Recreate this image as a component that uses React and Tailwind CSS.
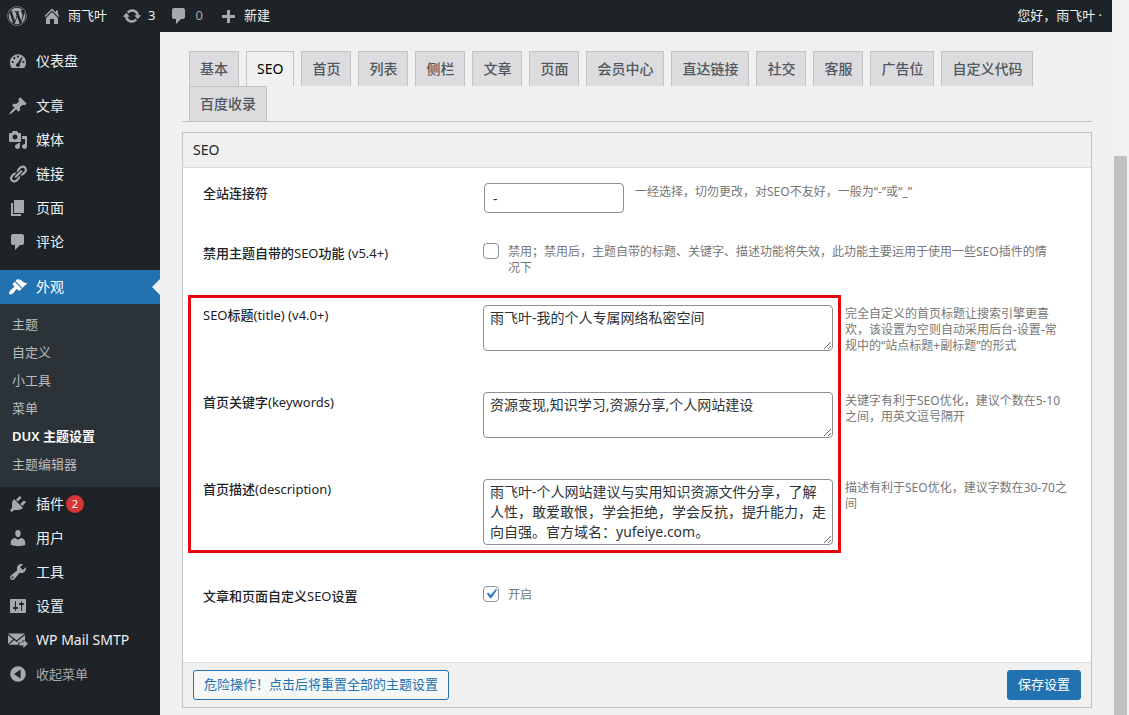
import { useState } from "react";
import { FaWordpress } from "react-icons/fa";
import clsx from "clsx";

const ICONS = {
  home: "M16 8.5l1.53 1.53-1.06 1.06L10 4.6l-6.47 6.49-1.06-1.06L10 2.5l4 4v-2h2v4zm-6-2.46l6 5.99V18H12v-5H8v5H4v-5.97z",
  update:
    "M10.2 3.28c3.53 0 6.43 2.61 6.92 6h2.08l-3.5 4-3.5-4h2.32c-.45-1.97-2.21-3.45-4.32-3.45-1.45 0-2.73.71-3.54 1.78L4.95 5.66C6.23 4.2 8.11 3.28 10.2 3.28zm-.4 13.44c-3.52 0-6.43-2.61-6.92-6H.8l3.5-4c1.17 1.33 2.33 2.67 3.5 4H5.48c.45 1.97 2.21 3.45 4.32 3.45 1.45 0 2.73-.71 3.54-1.78l1.71 1.95c-1.28 1.46-3.15 2.38-5.25 2.38z",
  plus: "M17 9v3h-5v5H9v-5H4V9h5V4h3v5h5z",
  dashboard:
    "M3.76 17h12.48c1.09-1.54 1.76-3.43 1.76-5.5 0-4.6-3.58-8.2-8-8.2s-8 3.6-8 8.2c0 2.07.67 3.96 1.76 5.5zM10 4.6a1.05 1.05 0 110 2.1 1.05 1.05 0 010-2.1zM6.3 6.1a1.05 1.05 0 110 2.1 1.05 1.05 0 010-2.1zM13.6 6.1l.9.6-2.6 6.6c.3 1.5-.6 2.7-1.9 2.7s-2.2-1.3-1.9-2.5c.2-.8.9-1.4 1.7-1.5zM4.6 9.9a1.05 1.05 0 110 2.1 1.05 1.05 0 010-2.1zM15.4 9.9a1.05 1.05 0 110 2.1 1.05 1.05 0 010-2.1z",
  post: "M10.44 3.02l1.82-1.82 6.36 6.35-1.83 1.82c-1.05-.68-2.48-.57-3.41.36l-.75.75c-.92.93-1.04 2.35-.35 3.41l-1.83 1.82-2.41-2.41-2.8 2.79c-.42.42-3.38 2.71-3.8 2.29s1.86-3.39 2.28-3.81l2.79-2.79L4.1 9.36l1.83-1.82c1.05.69 2.48.57 3.4-.36l.75-.75c.93-.92 1.05-2.35.36-3.41z",
  media:
    "M13 11V4c0-.55-.45-1-1-1h-1.67L9 1H5L3.67 3H2c-.55 0-1 .45-1 1v7c0 .55.45 1 1 1h10c.55 0 1-.45 1-1zM7 4.5c1.38 0 2.5 1.12 2.5 2.5S8.38 9.5 7 9.5 4.5 8.38 4.5 7 5.62 4.5 7 4.5zM14 6h5v10.5c0 1.38-1.12 2.5-2.5 2.5S14 17.88 14 16.5s1.12-2.5 2.5-2.5c.17 0 .34.02.5.05V9h-3V6zm-4 8.05V13h2v3.5c0 1.38-1.12 2.5-2.5 2.5S7 17.88 7 16.5 8.12 14 9.5 14c.17 0 .34.02.5.05z",
  links:
    "M17.74 2.76c1.68 1.69 1.68 4.41 0 6.1l-1.53 1.52c-1.12 1.12-2.7 1.47-4.14 1.09l2.62-2.61.76-.77.76-.76c.84-.84.84-2.2 0-3.04-.84-.85-2.2-.85-3.04 0l-.77.76-3.38 3.38c-.37-1.44-.02-3.02 1.1-4.14l1.52-1.53c1.69-1.68 4.42-1.68 6.1 0zM8.59 13.43l5.34-5.34c.42-.42.42-1.1 0-1.52-.44-.43-1.13-.39-1.53 0l-5.33 5.34c-.42.42-.42 1.1 0 1.52.44.43 1.13.39 1.52 0zm-.76 2.29l4.14-4.15c.38 1.44.03 3.02-1.09 4.14l-1.52 1.53c-1.69 1.68-4.41 1.68-6.1 0-1.68-1.68-1.68-4.42 0-6.1l1.53-1.52c1.12-1.12 2.7-1.47 4.14-1.1l-4.14 4.15c-.85.84-.85 2.2 0 3.05.84.84 2.2.84 3.04 0z",
  page: "M6 15V2h10v13H6zm-1 1h8v2H3V5h2v11z",
  comments: "M5 2h9c1.1 0 2 .9 2 2v7c0 1.1-.9 2-2 2h-2l-5 5v-5H5c-1.1 0-2-.9-2-2V4c0-1.1.9-2 2-2z",
  appearance:
    "M14.48 11.06L7.41 3.99l1.5-1.5c.5-.56 2.3-.47 3.51.32 1.21.8 1.43 1.28 2.91 2.1 1.18.64 2.45 1.26 4.45.85zm-.71.71L6.7 4.7 4.93 6.47c-.39.39-.39 1.02 0 1.41l1.06 1.06c.39.39.39 1.03 0 1.42-.6.6-1.43 1.11-2.21 1.69-.35.26-.7.53-1.01.84C1.43 14.23.4 16.08 1.4 17.07c.99 1 2.84-.03 4.18-1.36.31-.31.58-.66.85-1.02.57-.78 1.08-1.61 1.69-2.21.39-.39 1.02-.39 1.41 0l1.06 1.06c.39.39 1.02.39 1.41 0z",
  plugins:
    "M13.11 4.36L9.87 7.6 8 5.73l3.24-3.24c.35-.34 1.05-.2 1.56.32.52.51.66 1.21.31 1.55zm-8 1.77l.91-1.12 9.01 9.01-1.19.84c-.71.71-2.63 1.16-3.82 1.16H6.14L4.9 17.26c-.59.59-1.54.59-2.12 0-.59-.58-.59-1.53 0-2.12l1.24-1.24v-3.88c0-1.13.4-3.19 1.09-3.89zm7.26 3.97l3.24-3.24c.34-.35 1.04-.21 1.55.31.52.51.66 1.21.31 1.55l-3.24 3.25z",
  users:
    "M10 9.25c-2.27 0-2.73-3.44-2.73-3.44C7 4.02 7.82 2 9.97 2c2.16 0 2.98 2.02 2.71 3.81 0 0-.41 3.44-2.68 3.44zm0 2.57L12.72 10c2.39 0 4.52 2.33 4.52 4.53v2.49s-3.65 1.13-7.24 1.13c-3.65 0-7.24-1.13-7.24-1.13v-2.49c0-2.25 1.94-4.48 4.47-4.48z",
  tools:
    "M16.68 9.77c-1.34 1.34-3.3 1.67-4.95.99l-5.41 6.52c-.99.99-2.59.99-3.58 0s-.99-2.59 0-3.57l6.52-5.42c-.68-1.65-.35-3.61.99-4.95 1.28-1.28 3.12-1.62 4.72-1.06l-2.89 2.89 2.82 2.82 2.86-2.87c.53 1.58.18 3.39-1.08 4.65zM3.81 16.21c.4.39 1.04.39 1.43 0 .4-.4.4-1.04 0-1.43-.39-.4-1.03-.4-1.43 0-.39.39-.39 1.03 0 1.43z",
  settings:
    "M18 16V4c0-.55-.45-1-1-1H3c-.55 0-1 .45-1 1v12c0 .55.45 1 1 1h14c.55 0 1-.45 1-1zM8 11h1c.55 0 1 .45 1 1s-.45 1-1 1H8v1.5c0 .28-.22.5-.5.5s-.5-.22-.5-.5V13H6c-.55 0-1-.45-1-1s.45-1 1-1h1V5.5c0-.28.22-.5.5-.5s.5.22.5.5V11zm5-2h-1c-.55 0-1-.45-1-1s.45-1 1-1h1V5.5c0-.28.22-.5.5-.5s.5.22.5.5V7h1c.55 0 1 .45 1 1s-.45 1-1 1h-1v5.5c0 .28-.22.5-.5.5s-.5-.22-.5-.5V9z",
  mail: "M0 3.5h17L8.5 10.2zM0 5l5.2 4.2L0 14zM17 5v5.3h-2.6v1.6h-4v2.9H.8l5.4-4.7 2.3 1.9 2.4-1.9zM15.4 9.6l4.6 4.2-4.6 4.2v-2.6h-4v-3.2h4z",
  collapse: "M10 2.2a7.8 7.8 0 110 15.6 7.8 7.8 0 010-15.6zM12.6 5.6L6 10l6.6 4.4z",
};

function Icon({ name, className }) {
  return (
    <svg viewBox="0 0 20 20" aria-hidden="true" fill="currentColor" fillRule="evenodd" className={clsx("size-5 shrink-0", className)}>
      <path d={ICONS[name]} />
    </svg>
  );
}

const MENU = [
  { icon: "dashboard", label: "仪表盘", gap: true },
  { icon: "post", label: "文章" },
  { icon: "media", label: "媒体" },
  { icon: "links", label: "链接" },
  { icon: "page", label: "页面" },
  { icon: "comments", label: "评论", gap: true },
  {
    icon: "appearance",
    label: "外观",
    active: true,
    children: ["主题", "自定义", "小工具", "菜单", "DUX 主题设置", "主题编辑器"],
  },
  { icon: "plugins", label: "插件", badge: 2 },
  { icon: "users", label: "用户" },
  { icon: "tools", label: "工具" },
  { icon: "settings", label: "设置" },
  { icon: "mail", label: "WP Mail SMTP" },
];

const TABS = ["基本", "SEO", "首页", "列表", "侧栏", "文章", "页面", "会员中心", "直达链接", "社交", "客服", "广告位", "自定义代码", "百度收录"];

const TEXT_FIELDS = [
  {
    id: "seo-title",
    label: "SEO标题(title) (v4.0+)",
    rows: 2,
    value: "雨飞叶-我的个人专属网络私密空间",
    help: "完全自定义的首页标题让搜索引擎更喜欢，该设置为空则自动采用后台-设置-常规中的“站点标题+副标题”的形式",
  },
  {
    id: "seo-keywords",
    label: "首页关键字(keywords)",
    rows: 2,
    value: "资源变现,知识学习,资源分享,个人网站建设",
    help: "关键字有利于SEO优化，建议个数在5-10之间，用英文逗号隔开",
  },
  {
    id: "seo-description",
    label: "首页描述(description)",
    rows: 3,
    value:
      "雨飞叶-个人网站建议与实用知识资源文件分享，了解人性，敢爱敢恨，学会拒绝，学会反抗，提升能力，走向自强。官方域名：yufeiye.com。",
    help: "描述有利于SEO优化，建议字数在30-70之间",
  },
];

function AdminBar() {
  return (
    <header className="flex h-8 items-center justify-between bg-[#1d2327] pr-2.5 text-[13px] text-[#f0f0f1]">
      <nav className="flex items-center text-[#a7aaad]" aria-label="工具栏">
        <a href="#wp" aria-label="WordPress" className="flex w-[34px] justify-center">
          <FaWordpress className="size-5" />
        </a>
        <a href="#site" className="flex items-center gap-1.5 px-2">
          <Icon name="home" />
          <span className="text-[#f0f0f1]">雨飞叶</span>
        </a>
        <a href="#update" className="flex items-center gap-1.5 px-[7px]">
          <Icon name="update" />
          <span className="text-[#f0f0f1]">3</span>
        </a>
        <a href="#comments" className="flex items-center gap-1.5 px-[7px]">
          <Icon name="comments" />
          <span>0</span>
        </a>
        <a href="#new" className="flex items-center gap-1.5 px-2">
          <Icon name="plus" />
          <span className="text-[#f0f0f1]">新建</span>
        </a>
      </nav>
      <a href="#me">您好，雨飞叶 ·</a>
    </header>
  );
}

function Sidebar() {
  return (
    <nav className="w-40 shrink-0 bg-[#1d2327] pt-3 text-sm text-[#f0f0f1]" aria-label="主菜单">
      <ul>
        {MENU.map((item) => (
          <li key={item.label} className={clsx(item.gap && "mb-[11px]")}>
            <a
              href={"#" + item.icon}
              className={clsx("relative flex h-[34px] items-center gap-2 pl-2", item.active && "bg-[#2271b1] text-white")}
            >
              <Icon name={item.icon} className={item.active ? "text-white" : "text-[#a7aaad]"} />
              <span>{item.label}</span>
              {item.badge && (
                <span className="-ml-1.5 flex size-[18px] items-center justify-center rounded-full bg-[#d63638] text-[11px] text-white">
                  {item.badge}
                </span>
              )}
              {item.active && (
                <span className="absolute top-1/2 right-0 -translate-y-1/2 border-y-8 border-r-8 border-y-transparent border-r-[#f0f0f1]" />
              )}
            </a>
            {item.children && (
              <ul className="bg-[#2c3338] pt-1.5 pb-[9px] text-[13px] text-[#b9bcbf]">
                {item.children.map((child) => (
                  <li key={child}>
                    <a
                      href={"#" + child}
                      className={clsx("flex h-7 items-center px-3", child === "DUX 主题设置" && "font-semibold text-white")}
                    >
                      {child}
                    </a>
                  </li>
                ))}
              </ul>
            )}
          </li>
        ))}
      </ul>
      <button type="button" className="flex h-[34px] w-full items-center gap-2 pl-2 text-[13px] text-[#a7aaad]">
        <Icon name="collapse" />
        收起菜单
      </button>
    </nav>
  );
}

function Tabs({ current, onSelect }) {
  return (
    <div role="tablist" className="flex flex-wrap gap-x-[7px] border-b border-[#c3c4c7] pl-[7px]">
      {TABS.map((tab) => (
        <button
          key={tab}
          type="button"
          role="tab"
          aria-selected={tab === current}
          onClick={() => onSelect(tab)}
          className={clsx(
            "h-[35px] border border-b-0 border-[#c3c4c7] px-2.5 font-['Noto_Sans','Noto_Sans_CJK_SC_Medium','Noto_Sans_CJK_SC',sans-serif] text-sm",
            tab === current ? "bg-[#f0f0f1] text-black" : "bg-[#dcdcde] text-[#50575e]"
          )}
        >
          {tab}
        </button>
      ))}
    </div>
  );
}

function Checkbox({ id, defaultChecked, children }) {
  return (
    <div className="flex max-w-[570px] flex-1 gap-[9px]">
      <span className="relative size-4 shrink-0">
        <input
          id={id}
          type="checkbox"
          defaultChecked={defaultChecked}
          className="peer block size-4 appearance-none rounded border border-[#8c8f94] bg-white"
        />
        <svg
          viewBox="0 0 20 20"
          aria-hidden="true"
          className="pointer-events-none absolute -top-0.5 -left-0.5 hidden size-5 fill-[#3582c4] peer-checked:block"
        >
          <path d="M14.83 4.89l1.34.94-5.81 8.38H9.02L5.78 9.67l1.34-1.25 2.57 2.4z" />
        </svg>
      </span>
      <label htmlFor={id} className="pt-px text-xs leading-4 text-[#777]">
        {children}
      </label>
    </div>
  );
}

const LABEL =
  "w-[280px] shrink-0 font-['Noto_Sans','Noto_Sans_CJK_SC_Medium','Noto_Sans_CJK_SC',sans-serif] text-[13px] leading-5 text-[#1d2327]";

function SeoForm() {
  return (
    <div className="bg-white px-5 pt-[15px] pb-14">
      <div className="flex pb-[30px]">
        <label htmlFor="connector" className={LABEL}>
          全站连接符
        </label>
        <div className="flex flex-1 gap-[11px] pl-px">
          <input
            id="connector"
            type="text"
            defaultValue="-"
            className="h-[30px] w-[140px] rounded border border-[#8c8f94] bg-white px-2 text-sm text-[#2c3338]"
          />
          <p className="pt-px text-xs leading-4 text-[#777]">一经选择，切勿更改，对SEO不友好，一般为“-”或“_”</p>
        </div>
      </div>

      <div className="flex pb-[29px]">
        <label htmlFor="disable-seo" className={LABEL}>
          禁用主题自带的SEO功能 (v5.4+)
        </label>
        <Checkbox id="disable-seo">
          禁用；禁用后，主题自带的标题、关键字、描述功能将失效，此功能主要运用于使用一些SEO插件的情况下
        </Checkbox>
      </div>

      <div className="relative">
        <div className="pointer-events-none absolute -top-2.5 bottom-[33px] -left-[15px] w-[653px] border-3 border-[#e30b0f]" />
        {TEXT_FIELDS.map((field) => (
          <div key={field.id} className="flex items-start">
            <label htmlFor={field.id} className={LABEL}>
              {field.label}
            </label>
            <textarea
              id={field.id}
              rows={field.rows}
              defaultValue={field.value}
              className="mb-[41px] block w-[350px] shrink-0 resize rounded border border-[#8c8f94] bg-white px-1.5 py-0.5 text-sm leading-5 text-[#2c3338]"
            />
            <p className="ml-3 max-w-[223px] pt-px text-xs leading-4 text-[#777]">{field.help}</p>
          </div>
        ))}
      </div>

      <div className="flex">
        <label htmlFor="custom-seo" className={LABEL}>
          文章和页面自定义SEO设置
        </label>
        <Checkbox id="custom-seo" defaultChecked>
          开启
        </Checkbox>
      </div>
    </div>
  );
}

export default function App() {
  const [tab, setTab] = useState("SEO");
  return (
    <div className="flex min-h-screen bg-[#f0f0f1] font-['Noto_Sans','Noto_Sans_CJK_SC',sans-serif]">
      <div className="flex min-w-0 flex-1 flex-col">
        <AdminBar />
        <div className="flex flex-1">
          <Sidebar />
          <main className="min-w-0 flex-1 pt-[19px] pr-5 pl-[22px]">
            <Tabs current={tab} onSelect={setTab} />
            <form className="mt-2.5 border border-[#c3c4c7]" onSubmit={(e) => e.preventDefault()}>
              <h3 className="border-b border-[#dcdcde] px-2.5 py-[7px] text-sm leading-5 text-[#1d2327]">SEO</h3>
              <SeoForm />
              <div className="flex items-center justify-between border-t border-[#dcdcde] px-2.5 py-[7px] text-[13px]">
                <button type="reset" className="h-[30px] rounded-[3px] border border-[#2271b1] bg-[#f6f7f7] px-2.5 text-[#2271b1]">
                  危险操作！点击后将重置全部的主题设置
                </button>
                <button type="submit" className="h-[30px] rounded-[3px] border border-[#2271b1] bg-[#2271b1] px-2.5 text-white">
                  保存设置
                </button>
              </div>
            </form>
          </main>
        </div>
      </div>
      <div className="flex w-[17px] shrink-0 flex-col bg-[#f1f1f1] px-0.5 pt-[156px]">
        <div className="flex-1 bg-[#c1c1c1]" />
      </div>
    </div>
  );
}
